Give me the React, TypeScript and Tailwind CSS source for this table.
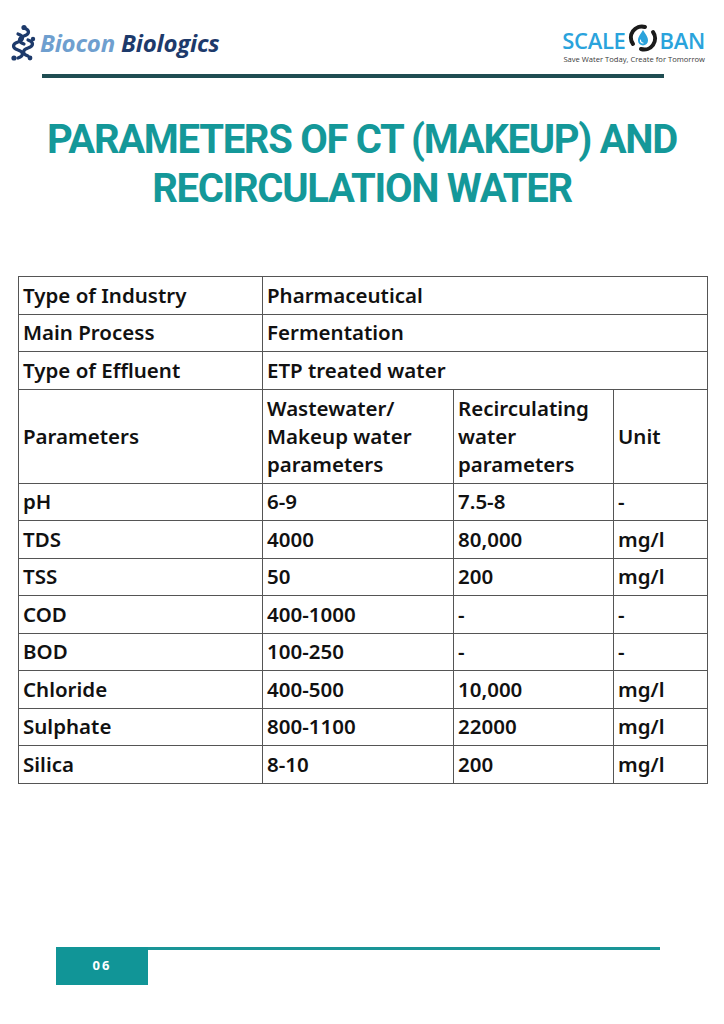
import React from 'react';

const rows: [string, string, string, string][] = [
  ['pH', '6-9', '7.5-8', '-'],
  ['TDS', '4000', '80,000', 'mg/l'],
  ['TSS', '50', '200', 'mg/l'],
  ['COD', '400-1000', '-', '-'],
  ['BOD', '100-250', '-', '-'],
  ['Chloride', '400-500', '10,000', 'mg/l'],
  ['Sulphate', '800-1100', '22000', 'mg/l'],
  ['Silica', '8-10', '200', 'mg/l'],
];

function BioconMark() {
  return (
    <svg width="26" height="38" viewBox="0 0 26 38" fill="none">
      <g stroke="#1d3a6b" strokeWidth="3.2" strokeLinecap="round">
        <path d="M14 4 C20 6 20 10 14 12 C8 14 8 18 14 20" />
        <path d="M8 10 C14 12 14 16 8 18 C2 20 2 24 8 26 C14 28 14 32 8 34" />
        <path d="M18 16 C24 18 24 22 18 24 C12 26 12 30 18 32" />
      </g>
      <g fill="#1d3a6b">
        <circle cx="14" cy="3.5" r="2.6" />
        <circle cx="4" cy="34" r="2.6" />
        <circle cx="20" cy="34" r="2.4" />
        <circle cx="23" cy="15" r="2.2" />
      </g>
    </svg>
  );
}

function ScaleBanMark() {
  return (
    <svg width="32" height="32" viewBox="0 0 32 32" fill="none">
      <path d="M6 22 A11 11 0 0 1 18 5" stroke="#1b1b1b" strokeWidth="4" strokeLinecap="round" />
      <path d="M26 10 A11 11 0 0 1 14 27" stroke="#1b1b1b" strokeWidth="4" strokeLinecap="round" />
      <path d="M16 8 C19 13 21 15 21 18.5 A5 5 0 0 1 11 18.5 C11 15 13 13 16 8 Z" fill="#2aa3dc" />
      <path d="M13.5 18 A2.5 2.5 0 0 0 16 21" stroke="#ffffff" strokeWidth="1.2" strokeLinecap="round" />
    </svg>
  );
}

export default function App() {
  const cell = 'border-[1.5px] border-[#555] px-[4px] align-middle';
  return (
    <div className="w-[724px] h-[1024px] bg-white relative overflow-hidden" style={{ fontFamily: '"Noto Sans", sans-serif' }}>
      {/* Header */}
      <div className="flex items-start justify-between px-[10px] pt-[24px] h-[74px]">
        <div className="flex items-center gap-[4px]">
          <BioconMark />
          <div className="text-[24px] font-bold italic leading-none tracking-[-0.2px]" style={{ fontFamily: '"Open Sans", sans-serif' }}>
            <span className="text-[#6f9fcf]">Biocon</span>{' '}
            <span className="text-[#1d3a6b]">Biologics</span>
          </div>
        </div>
        <div className="flex flex-col items-end pr-[9px] pt-[2px]">
          <div className="flex items-center h-[28px] leading-none" style={{ fontFamily: '"Open Sans", sans-serif' }}>
            <span className="text-[#2aa3dc] text-[22px] font-semibold tracking-[-0.3px]">SCALE</span>
            <span className="mx-[1px] -mt-[4px]"><ScaleBanMark /></span>
            <span className="text-[#2aa3dc] text-[22px] font-semibold tracking-[-0.3px]">BAN</span>
          </div>
          <div className="text-[7.6px] text-[#3a3a3a] leading-[9px] mt-[1px]" style={{ fontFamily: '"Open Sans", sans-serif' }}>
            Save Water Today, Create for Tomorrow
          </div>
        </div>
      </div>
      <div className="ml-[42px] w-[622px] h-[4px] bg-[#1f4d52]" />

      {/* Title */}
      <h1
        className="mt-[37px] text-center text-[#149899] text-[40px] font-bold leading-[49px] tracking-[-1.3px]"
        style={{ fontFamily: 'Roboto, sans-serif' }}
      >
        PARAMETERS OF CT (MAKEUP) AND
        <br />
        RECIRCULATION WATER
      </h1>

      {/* Table */}
      <div className="mt-[63px] ml-[18px]">
        <table className="border-collapse table-fixed w-[689px] text-[20.5px] font-semibold text-[#111] leading-[25px]">
          <colgroup>
            <col className="w-[244px]" />
            <col className="w-[191px]" />
            <col className="w-[160px]" />
            <col className="w-[94px]" />
          </colgroup>
          <tbody>
            <tr className="h-[37.5px]">
              <td className={cell}>Type of Industry</td>
              <td className={cell} colSpan={3}>Pharmaceutical</td>
            </tr>
            <tr className="h-[37.5px]">
              <td className={cell}>Main Process</td>
              <td className={cell} colSpan={3}>Fermentation</td>
            </tr>
            <tr className="h-[37.5px]">
              <td className={cell}>Type of Effluent</td>
              <td className={cell} colSpan={3}>ETP treated water</td>
            </tr>
            <tr className="h-[94px] leading-[28px]">
              <td className={cell}>Parameters</td>
              <td className={cell}>Wastewater/<br />Makeup water<br />parameters</td>
              <td className={cell}>Recirculating<br />water<br />parameters</td>
              <td className={cell}>Unit</td>
            </tr>
            {rows.map((r) => (
              <tr key={r[0]} className="h-[37.5px]">
                {r.map((c, i) => (
                  <td key={i} className={cell}>{c}</td>
                ))}
              </tr>
            ))}
          </tbody>
        </table>
      </div>

      {/* Footer */}
      <div className="absolute left-[56px] top-[947px] flex items-start">
        <div className="w-[92px] h-[38px] bg-[#119597] flex items-center justify-center text-white text-[13px] font-bold tracking-[2px]">
          06
        </div>
        <div className="w-[512px] h-[3px] bg-[#1a9597]" />
      </div>
    </div>
  );
}
